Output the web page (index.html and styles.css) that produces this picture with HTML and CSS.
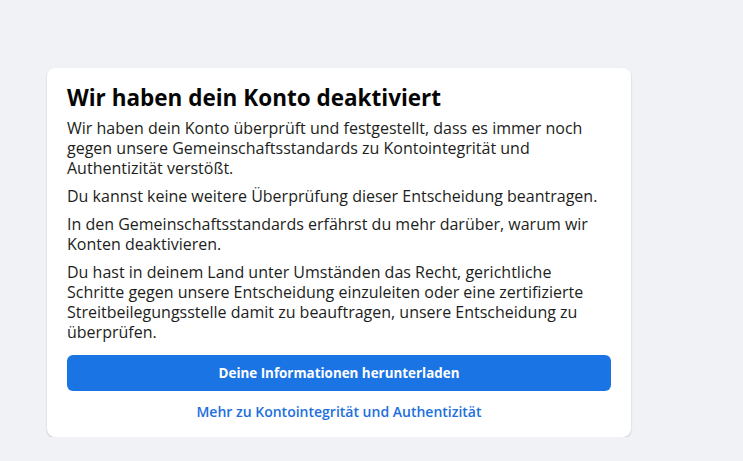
FILE: index.html
```html
<!DOCTYPE html>
<html lang="de">
<head>
	<meta charset="utf-8">
	<title>Konto deaktiviert</title>
	<link rel="stylesheet" href="styles.css">
</head>
<body>
<div id="page">
	<div class="card">
		<h1>Wir haben dein Konto deaktiviert</h1>
		<p>Wir haben dein Konto überprüft und festgestellt, dass es immer noch gegen unsere Gemeinschaftsstandards zu Kontointegrität und Authentizität verstößt.</p>
		<p>Du kannst keine weitere Überprüfung dieser Entscheidung beantragen.</p>
		<p>In den Gemeinschaftsstandards erfährst du mehr darüber, warum wir Konten deaktivieren.</p>
		<p>Du hast in deinem Land unter Umständen das Recht, gerichtliche Schritte gegen unsere Entscheidung einzuleiten oder eine zertifizierte Streitbeilegungsstelle damit zu beauftragen, unsere Entscheidung zu überprüfen.</p>
		<a class="btn-primary" href="#">Deine Informationen herunterladen</a>
		<a class="link" href="#">Mehr zu Kontointegrität und Authentizität</a>
	</div>
</div>
</body>
</html>
```

FILE: styles.css
```css
html {
	background-color: #f0f2f5;
}
body {
	margin: 0;
	font-family: "Open Sans", "Noto Sans", Arial, sans-serif;
	color: #1c1e21;
}
#page {
	padding: 68px 0 0 47px;
}
.card {
	width: 544px;
	padding: 16px 20px 15px;
	background-color: white;
	border-radius: 8px;
	box-shadow: 0 1px 2px rgba(0, 0, 0, .2);
	display: flex;
	flex-direction: column;
}
h1 {
	margin: 0 0 6px;
	font-size: 22.5px;
	line-height: 28px;
	font-weight: 700;
	color: #050505;
}
p {
	margin: 0 0 8px;
	font-size: 16px;
	line-height: 20px;
}
.btn-primary {
	margin-top: 5px;
	height: 36px;
	line-height: 36px;
	border-radius: 6px;
	background-color: #1b74e4;
	color: white;
	text-align: center;
	font-weight: 700;
	font-size: 13.4px;
	text-decoration: none;
}
.link {
	margin-top: 11px;
	text-align: center;
	color: #216fdb;
	font-size: 14px;
	font-weight: 600;
	line-height: 20px;
	text-decoration: none;
}
```
